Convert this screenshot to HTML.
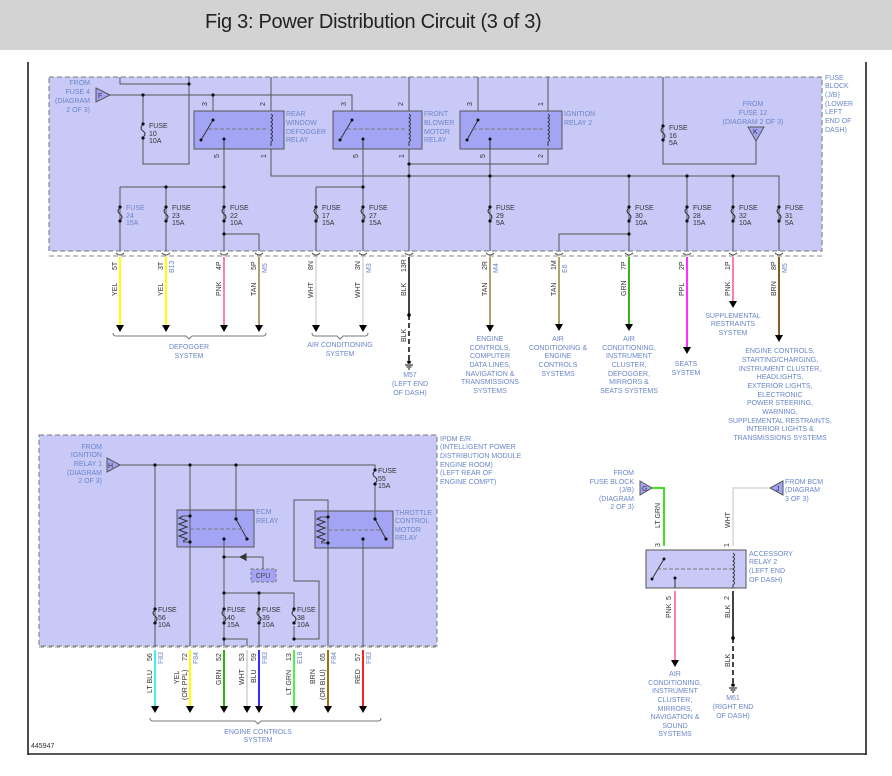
<!DOCTYPE html>
<html><head><meta charset="utf-8"><style>
html,body{margin:0;padding:0;background:#fff;width:892px;height:776px;overflow:hidden}
.hdr{position:absolute;left:0;top:0;width:892px;height:50px;background:#d3d3d3}
.hdr span{position:absolute;left:205px;top:11px;font:20px "Liberation Sans Narrow","Liberation Sans",sans-serif;color:#222;letter-spacing:-0.3px}
svg{position:absolute;left:0;top:0}
text{font-family:"Liberation Sans",sans-serif;font-size:7px}
.b{fill:#6a86c8}.k{fill:#333}.m{text-anchor:middle}.e{text-anchor:end}
.w{stroke:#555;stroke-width:1;fill:none}
</style></head><body>
<div class="hdr"><span>Fig 3: Power Distribution Circuit (3 of 3)</span></div>
<svg width="892" height="776" viewBox="0 0 892 776">
<defs>
<g id="fz"><circle r="1.6" fill="#111"/><circle cy="14" r="1.6" fill="#111"/><path d="M0 1 q-4 3 0 6 q4 3 0 6" stroke="#333" fill="none"/></g>
<path id="ar" d="M-4 -7 L4 -7 L0 0 Z" fill="#000"/>
<g id="cn"><path d="M-4 0 q4 4 8 0" stroke="#555" fill="none"/></g>
<g id="gnd"><circle r="1.8" fill="#000"/><path d="M-4 3 H4 M-2.5 5 H2.5 M-1 7 H1" stroke="#000"/></g>
</defs>
<!-- frame -->
<path d="M28 62 V755 M866 62 V755" stroke="#111" stroke-width="1.5"/>
<path d="M28 754 H866" stroke="#222" stroke-width="1.5"/>

<!-- TOP BOX -->
<rect x="49" y="77" width="773" height="174" fill="#c9c9f8" stroke="#777" stroke-dasharray="5,3"/>
<path d="M49 256 H822" stroke="#888" stroke-dasharray="5,3"/>
<polygon points="96,88 110,95 96,102" fill="#a4a4f4" stroke="#555"/><text x="98" y="98" class="k">F</text>
<text x="90" y="85" class="b e">FROM</text><text x="90" y="94" class="b e">FUSE 4</text><text x="90" y="103" class="b e">(DIAGRAM</text><text x="90" y="112" class="b e">2 OF 3)</text>
<g class="w">
<path d="M110 95 H352 V111 M213 95 V111 M143 95 V124 M143 138 V164 H189 V77 M120 77 V84 H189"/>
<path d="M271 77 V111 M271 149 V176 H779 V251 M224 149 V251 M120 187 H224 M120 187 V251 M166 187 V251 M224 234 H259 V251"/>
<path d="M409 77 V111 M409 149 V251 M409 164 H548 V149 M363 149 V251 M316 187 H363 M316 187 V251"/>
<path d="M478 77 V111 M548 77 V111 M490 149 V251 M629 176 V251 M687 176 V251 M733 176 V251 M629 234 H559 V251 M663 77 V164 H756 V141"/>
</g>
<g fill="#111">
<circle cx="143" cy="95" r="1.6"/><circle cx="213" cy="95" r="1.6"/><circle cx="189" cy="84" r="1.6"/><circle cx="166" cy="187" r="1.6"/><circle cx="224" cy="187" r="1.6"/><circle cx="224" cy="234" r="1.6"/><circle cx="363" cy="187" r="1.6"/><circle cx="409" cy="164" r="1.6"/><circle cx="409" cy="176" r="1.6"/><circle cx="490" cy="176" r="1.6"/><circle cx="629" cy="176" r="1.6"/><circle cx="687" cy="176" r="1.6"/><circle cx="733" cy="176" r="1.6"/><circle cx="629" cy="234" r="1.6"/>
</g>
<!-- relays top -->
<g stroke="#555" fill="#a4a4f4"><rect x="194" y="111" width="90" height="38"/><rect x="333" y="111" width="89" height="38"/><rect x="460" y="111" width="102" height="38"/></g>
<g stroke="#333" fill="none">
<path d="M213 120 L201 140 M224 139 V149 M352 120 L340 140 M363 139 V149 M478 120 L467 140 M490 139 V149"/>
<path d="M208 129 H268 M347 129 H406 M473 129 H545" stroke="#777" stroke-dasharray="4,2"/>
<path d="M271 114 q3 2 0 4 q3 2 0 4 q3 2 0 4 q3 2 0 4 q3 2 0 4 q3 2 0 4 q3 2 0 4 V146 M409 114 q3 2 0 4 q3 2 0 4 q3 2 0 4 q3 2 0 4 q3 2 0 4 q3 2 0 4 q3 2 0 4 V146 M548 114 q3 2 0 4 q3 2 0 4 q3 2 0 4 q3 2 0 4 q3 2 0 4 q3 2 0 4 q3 2 0 4 V146"/>
</g>
<g fill="#111"><circle cx="213" cy="120" r="1.5"/><circle cx="201" cy="140" r="1.5"/><circle cx="224" cy="139" r="1.5"/><circle cx="352" cy="120" r="1.5"/><circle cx="340" cy="140" r="1.5"/><circle cx="363" cy="139" r="1.5"/><circle cx="478" cy="120" r="1.5"/><circle cx="467" cy="140" r="1.5"/><circle cx="490" cy="139" r="1.5"/></g>
<g class="k">
<text transform="translate(207,106) rotate(-90)">3</text><text transform="translate(265,106) rotate(-90)">2</text><text transform="translate(219,158) rotate(-90)">5</text><text transform="translate(266,158) rotate(-90)">1</text>
<text transform="translate(346,106) rotate(-90)">3</text><text transform="translate(403,106) rotate(-90)">2</text><text transform="translate(358,158) rotate(-90)">5</text><text transform="translate(404,158) rotate(-90)">1</text>
<text transform="translate(472,106) rotate(-90)">3</text><text transform="translate(543,106) rotate(-90)">1</text><text transform="translate(485,158) rotate(-90)">5</text><text transform="translate(543,158) rotate(-90)">2</text>
</g>
<text x="286" y="116" class="b">REAR</text><text x="286" y="125" class="b">WINDOW</text><text x="286" y="134" class="b">DEFOGGER</text><text x="286" y="142" class="b">RELAY</text>
<text x="424" y="116" class="b">FRONT</text><text x="424" y="125" class="b">BLOWER</text><text x="424" y="134" class="b">MOTOR</text><text x="424" y="142" class="b">RELAY</text>
<text x="564" y="116" class="b">IGNITION</text><text x="564" y="125" class="b">RELAY 2</text>
<polygon points="748,127 764,127 756,141" fill="#a4a4f4" stroke="#555"/><text x="753" y="134" class="k">K</text>
<text x="753" y="106" class="b m">FROM</text><text x="753" y="115" class="b m">FUSE 12</text><text x="753" y="124" class="b m">(DIAGRAM 2 OF 3)</text>
<text x="825" y="80" class="b">FUSE</text><text x="825" y="88" class="b">BLOCK</text><text x="825" y="97" class="b">(J/B)</text><text x="825" y="106" class="b">(LOWER</text><text x="825" y="114" class="b">LEFT</text><text x="825" y="123" class="b">END OF</text><text x="825" y="132" class="b">DASH)</text>
<!-- top fuses -->
<use href="#fz" x="143" y="124"/><text x="149" y="128" class="k">FUSE</text><text x="149" y="136" class="k">10</text><text x="149" y="143" class="k">10A</text>
<use href="#fz" x="663" y="126"/><text x="669" y="130" class="k">FUSE</text><text x="669" y="138" class="k">16</text><text x="669" y="145" class="k">5A</text>
<use href="#fz" x="120" y="207"/><text x="126" y="210" class="b">FUSE</text><text x="126" y="218" class="b">24</text><text x="126" y="225" class="b">15A</text>
<use href="#fz" x="166" y="207"/><text x="172" y="210" class="k">FUSE</text><text x="172" y="218" class="k">23</text><text x="172" y="225" class="k">15A</text>
<use href="#fz" x="224" y="207"/><text x="230" y="210" class="k">FUSE</text><text x="230" y="218" class="k">22</text><text x="230" y="225" class="k">10A</text>
<use href="#fz" x="316" y="207"/><text x="322" y="210" class="k">FUSE</text><text x="322" y="218" class="k">17</text><text x="322" y="225" class="k">15A</text>
<use href="#fz" x="363" y="207"/><text x="369" y="210" class="k">FUSE</text><text x="369" y="218" class="k">27</text><text x="369" y="225" class="k">15A</text>
<use href="#fz" x="490" y="207"/><text x="496" y="210" class="k">FUSE</text><text x="496" y="218" class="k">29</text><text x="496" y="225" class="k">5A</text>
<use href="#fz" x="629" y="207"/><text x="635" y="210" class="k">FUSE</text><text x="635" y="218" class="k">30</text><text x="635" y="225" class="k">10A</text>
<use href="#fz" x="687" y="207"/><text x="693" y="210" class="k">FUSE</text><text x="693" y="218" class="k">28</text><text x="693" y="225" class="k">15A</text>
<use href="#fz" x="733" y="207"/><text x="739" y="210" class="k">FUSE</text><text x="739" y="218" class="k">32</text><text x="739" y="225" class="k">10A</text>
<use href="#fz" x="779" y="207"/><text x="785" y="210" class="k">FUSE</text><text x="785" y="218" class="k">31</text><text x="785" y="225" class="k">5A</text>
<!-- connectors under top box -->
<g><use href="#cn" x="120" y="253"/><use href="#cn" x="166" y="253"/><use href="#cn" x="224" y="253"/><use href="#cn" x="259" y="253"/><use href="#cn" x="316" y="253"/><use href="#cn" x="363" y="253"/><use href="#cn" x="409" y="253"/><use href="#cn" x="490" y="253"/><use href="#cn" x="559" y="253"/><use href="#cn" x="629" y="253"/><use href="#cn" x="687" y="253"/><use href="#cn" x="733" y="253"/><use href="#cn" x="779" y="253"/></g>
<!-- wires below top box -->
<g stroke-width="2" fill="none">
<path d="M120 257 V325" stroke="#ffff00"/><path d="M166 257 V325" stroke="#ffff00"/><path d="M224 257 V325" stroke="#ff80a0"/><path d="M259 257 V325" stroke="#b0a070"/>
<path d="M316 257 V325" stroke="#e0e0e0"/><path d="M363 257 V325" stroke="#e0e0e0"/><path d="M409 257 V315" stroke="#444"/><path d="M409 315 V362" stroke="#444" stroke-dasharray="5,3"/>
<path d="M490 257 V325" stroke="#b0a070"/><path d="M559 257 V324" stroke="#b0a070"/><path d="M629 257 V324" stroke="#40b020"/><path d="M687 257 V347" stroke="#ff30ff"/><path d="M733 257 V301" stroke="#ff80a0"/><path d="M779 257 V335" stroke="#806020"/>
</g>
<use href="#ar" x="120" y="332"/><use href="#ar" x="166" y="332"/><use href="#ar" x="224" y="332"/><use href="#ar" x="259" y="332"/><use href="#ar" x="316" y="332"/><use href="#ar" x="363" y="332"/><use href="#ar" x="490" y="332"/><use href="#ar" x="559" y="331"/><use href="#ar" x="629" y="331"/><use href="#ar" x="687" y="354"/><use href="#ar" x="733" y="308"/><use href="#ar" x="779" y="342"/>
<circle cx="409" cy="315" r="1.8" fill="#000"/><use href="#gnd" x="409" y="362"/>
<g class="k">
<text transform="translate(117,270) rotate(-90)">5T</text><text transform="translate(117,296) rotate(-90)">YEL</text>
<text transform="translate(163,270) rotate(-90)">3T</text><text transform="translate(163,296) rotate(-90)">YEL</text>
<text transform="translate(221,270) rotate(-90)">4P</text><text transform="translate(221,296) rotate(-90)">PNK</text>
<text transform="translate(256,270) rotate(-90)">5P</text><text transform="translate(256,296) rotate(-90)">TAN</text>
<text transform="translate(313,270) rotate(-90)">8N</text><text transform="translate(313,298) rotate(-90)">WHT</text>
<text transform="translate(360,270) rotate(-90)">3N</text><text transform="translate(360,298) rotate(-90)">WHT</text>
<text transform="translate(406,272) rotate(-90)">13R</text><text transform="translate(406,296) rotate(-90)">BLK</text><text transform="translate(406,342) rotate(-90)">BLK</text>
<text transform="translate(487,270) rotate(-90)">2R</text><text transform="translate(487,296) rotate(-90)">TAN</text>
<text transform="translate(556,270) rotate(-90)">1M</text><text transform="translate(556,296) rotate(-90)">TAN</text>
<text transform="translate(626,270) rotate(-90)">7P</text><text transform="translate(626,296) rotate(-90)">GRN</text>
<text transform="translate(684,270) rotate(-90)">2P</text><text transform="translate(684,296) rotate(-90)">PPL</text>
<text transform="translate(730,270) rotate(-90)">1P</text><text transform="translate(730,296) rotate(-90)">PNK</text>
<text transform="translate(776,270) rotate(-90)">8P</text><text transform="translate(776,296) rotate(-90)">BRN</text>
</g>
<g class="b">
<text transform="translate(174,273) rotate(-90)">B13</text><text transform="translate(267,273) rotate(-90)">M5</text><text transform="translate(371,273) rotate(-90)">M3</text><text transform="translate(498,273) rotate(-90)">M4</text><text transform="translate(567,273) rotate(-90)">E6</text><text transform="translate(787,273) rotate(-90)">M5</text>
</g>
<path d="M113 333 q0 3 3 3 H186 l3 3 l3 -3 H263 q3 0 3 -3 M312 333 q0 3 3 3 H337 l3 3 l3 -3 H365 q3 0 3 -3" stroke="#777" fill="none"/>
<text x="189" y="349" class="b m">DEFOGGER</text><text x="189" y="358" class="b m">SYSTEM</text>
<text x="340" y="347" class="b m">AIR CONDITIONING</text><text x="340" y="356" class="b m">SYSTEM</text>
<text x="410" y="377" class="b m">M57</text><text x="410" y="386" class="b m">(LEFT END</text><text x="410" y="395" class="b m">OF DASH)</text>
<g class="b m"><text x="490" y="341">ENGINE</text><text x="490" y="350">CONTROLS,</text><text x="490" y="358">COMPUTER</text><text x="490" y="367">DATA LINES,</text><text x="490" y="376">NAVIGATION &amp;</text><text x="490" y="384">TRANSMISSIONS</text><text x="490" y="393">SYSTEMS</text>
<text x="558" y="341">AIR</text><text x="558" y="350">CONDITIONING &amp;</text><text x="558" y="358">ENGINE</text><text x="558" y="367">CONTROLS</text><text x="558" y="376">SYSTEMS</text>
<text x="629" y="341">AIR</text><text x="629" y="350">CONDITIONING,</text><text x="629" y="358">INSTRUMENT</text><text x="629" y="367">CLUSTER,</text><text x="629" y="376">DEFOGGER,</text><text x="629" y="384">MIRRORS &amp;</text><text x="629" y="393">SEATS SYSTEMS</text>
<text x="686" y="366">SEATS</text><text x="686" y="375">SYSTEM</text>
<text x="733" y="318">SUPPLEMENTAL</text><text x="733" y="326">RESTRAINTS</text><text x="733" y="335">SYSTEM</text>
<text x="780" y="353">ENGINE CONTROLS,</text><text x="780" y="362">STARTING/CHARGING,</text><text x="780" y="371">INSTRUMENT CLUSTER,</text><text x="780" y="379">HEADLIGHTS,</text><text x="780" y="388">EXTERIOR LIGHTS,</text><text x="780" y="397">ELECTRONIC</text><text x="780" y="405">POWER STEERING,</text><text x="780" y="414">WARNING,</text><text x="780" y="423">SUPPLEMENTAL RESTRAINTS,</text><text x="780" y="431">INTERIOR LIGHTS &amp;</text><text x="780" y="440">TRANSMISSIONS SYSTEMS</text></g>

<!-- BOTTOM-LEFT BOX -->
<rect x="39" y="435" width="398" height="211" fill="#c9c9f8" stroke="#777" stroke-dasharray="5,3"/>
<polygon points="107,458 120,465 107,472" fill="#a4a4f4" stroke="#555"/><text x="108" y="468" class="k">H</text>
<g class="b e"><text x="102" y="449">FROM</text><text x="102" y="457">IGNITION</text><text x="102" y="466">RELAY 1</text><text x="102" y="475">(DIAGRAM</text><text x="102" y="483">2 OF 3)</text></g>
<g class="b"><text x="440" y="441">IPDM E/R</text><text x="440" y="449">(INTELLIGENT POWER</text><text x="440" y="458">DISTRIBUTION MODULE</text><text x="440" y="467">ENGINE ROOM)</text><text x="440" y="475">(LEFT REAR OF</text><text x="440" y="484">ENGINE COMPT)</text></g>
<rect x="177" y="510" width="77" height="37" fill="#a4a4f4" stroke="#555"/>
<rect x="315" y="511" width="78" height="37" fill="#a4a4f4" stroke="#555"/>
<rect x="251" y="569" width="25" height="13" fill="#a4a4f4" stroke="#777" stroke-dasharray="3,2"/><text x="263" y="578" class="m" style="fill:#444">CPU</text>
<g class="w">
<path d="M120 465 H375 V470 M155 465 V646 M190 465 V646 M236 465 V519 M375 484 V519 M224 539 V646 M224 557 H263 V569 M224 593 H294 V612 M259 593 V646 M294 626 V639 H319 V581 H294 V500 H328 V646 M224 626 V639 H247 V646 M363 539 V646"/>
<path d="M236 519 L247 539 M375 519 L386 539" stroke="#333"/>
<path d="M190 529 H245 M328 530 H383" stroke="#777" stroke-dasharray="4,2"/>
<path d="M183 516 l-4 2 l8 3 l-8 3 l8 3 l-8 3 l8 3 l-8 3 l8 3 l-4 2 M321 517 l-4 2 l8 3 l-8 3 l8 3 l-8 3 l8 3 l-8 3 l8 3 l-4 2" stroke="#333"/>
<path d="M183 516 H190 M183 542 H190 M321 517 H328 M321 543 H328"/>
</g>
<path d="M240 557 l6 -3 v6 z M246 553 v8" fill="#333" stroke="#333"/>
<g fill="#111"><circle cx="155" cy="465" r="1.6"/><circle cx="190" cy="465" r="1.6"/><circle cx="236" cy="465" r="1.6"/><circle cx="190" cy="516" r="1.6"/><circle cx="190" cy="542" r="1.6"/><circle cx="236" cy="519" r="1.6"/><circle cx="247" cy="539" r="1.6"/><circle cx="224" cy="539" r="1.6"/><circle cx="224" cy="557" r="1.6"/><circle cx="224" cy="593" r="1.6"/><circle cx="259" cy="593" r="1.6"/><circle cx="224" cy="639" r="1.6"/><circle cx="294" cy="639" r="1.6"/><circle cx="328" cy="517" r="1.6"/><circle cx="328" cy="543" r="1.6"/><circle cx="375" cy="519" r="1.6"/><circle cx="386" cy="539" r="1.6"/><circle cx="363" cy="539" r="1.6"/></g>
<text x="256" y="514" class="b">ECM</text><text x="256" y="523" class="b">RELAY</text>
<g class="b"><text x="395" y="515">THROTTLE</text><text x="395" y="523">CONTROL</text><text x="395" y="532">MOTOR</text><text x="395" y="540">RELAY</text></g>
<use href="#fz" x="375" y="470"/><text x="378" y="473" class="k">FUSE</text><text x="378" y="481" class="k">55</text><text x="378" y="488" class="k">15A</text>
<use href="#fz" x="155" y="609"/><text x="158" y="612" class="k">FUSE</text><text x="158" y="620" class="k">56</text><text x="158" y="627" class="k">10A</text>
<use href="#fz" x="224" y="609"/><text x="227" y="612" class="k">FUSE</text><text x="227" y="620" class="k">40</text><text x="227" y="627" class="k">15A</text>
<use href="#fz" x="259" y="609"/><text x="262" y="612" class="k">FUSE</text><text x="262" y="620" class="k">39</text><text x="262" y="627" class="k">10A</text>
<use href="#fz" x="294" y="609"/><text x="297" y="612" class="k">FUSE</text><text x="297" y="620" class="k">38</text><text x="297" y="627" class="k">10A</text>
<path d="M39 647 H437" stroke="#888" stroke-dasharray="5,3"/>
<g stroke-width="2" fill="none">
<path d="M155 650 V706" stroke="#40f0f0"/><path d="M190 650 V706" stroke="#ffff00"/><path d="M224 650 V706" stroke="#30b010"/><path d="M247 650 V706" stroke="#dcdcdc"/><path d="M259 650 V706" stroke="#3030ff"/><path d="M294 650 V706" stroke="#50f050"/><path d="M328 650 V706" stroke="#a07010"/><path d="M363 650 V706" stroke="#ff2020"/>
</g>
<use href="#ar" x="155" y="713"/><use href="#ar" x="190" y="713"/><use href="#ar" x="224" y="713"/><use href="#ar" x="247" y="713"/><use href="#ar" x="259" y="713"/><use href="#ar" x="294" y="713"/><use href="#ar" x="328" y="713"/><use href="#ar" x="363" y="713"/>
<g class="k">
<text transform="translate(152,661) rotate(-90)">56</text><text transform="translate(187,661) rotate(-90)">72</text><text transform="translate(221,661) rotate(-90)">52</text><text transform="translate(244,661) rotate(-90)">53</text><text transform="translate(256,661) rotate(-90)">59</text><text transform="translate(291,661) rotate(-90)">13</text><text transform="translate(325,661) rotate(-90)">65</text><text transform="translate(360,661) rotate(-90)">57</text>
<text transform="translate(152,693) rotate(-90)">LT BLU</text><text transform="translate(179,684) rotate(-90)">YEL</text><text transform="translate(187,700) rotate(-90)">(OR PPL)</text><text transform="translate(221,685) rotate(-90)">GRN</text><text transform="translate(244,685) rotate(-90)">WHT</text><text transform="translate(256,683) rotate(-90)">BLU</text><text transform="translate(291,695) rotate(-90)">LT GRN</text><text transform="translate(315,684) rotate(-90)">BRN</text><text transform="translate(325,700) rotate(-90)">(OR BLU)</text><text transform="translate(360,684) rotate(-90)">RED</text>
</g>
<g class="b"><text transform="translate(163,664) rotate(-90)">F83</text><text transform="translate(198,664) rotate(-90)">F84</text><text transform="translate(267,664) rotate(-90)">F83</text><text transform="translate(302,664) rotate(-90)">E18</text><text transform="translate(336,664) rotate(-90)">F84</text><text transform="translate(371,664) rotate(-90)">F83</text></g>
<path d="M150 718 q0 3 3 3 H255 l3 3 l3 -3 H378 q3 0 3 -3" stroke="#777" fill="none"/>
<text x="258" y="734" class="b m">ENGINE CONTROLS</text><text x="258" y="742" class="b m">SYSTEM</text>
<text x="31" y="748" class="k">445947</text>

<!-- ACCESSORY RELAY -->
<polygon points="640,481 652,488 640,495" fill="#a4a4f4" stroke="#555"/><text x="642" y="491" class="k">G</text>
<g class="b e"><text x="634" y="475">FROM</text><text x="634" y="484">FUSE BLOCK</text><text x="634" y="492">(J/B)</text><text x="634" y="501">(DIAGRAM</text><text x="634" y="509">2 OF 3)</text></g>
<path d="M652 488 H664 V546" stroke="#40e020" stroke-width="2" fill="none"/>
<polygon points="783,481 770,488 783,495" fill="#a4a4f4" stroke="#555"/><text x="776" y="491" class="k">J</text>
<g class="b"><text x="785" y="484">FROM BCM</text><text x="785" y="492">(DIAGRAM</text><text x="785" y="501">3 OF 3)</text></g>
<path d="M770 488 H733 V546" stroke="#e0e0e0" stroke-width="2" fill="none"/>
<text transform="translate(660,528) rotate(-90)" class="k">LT GRN</text><text transform="translate(730,528) rotate(-90)" class="k">WHT</text>
<text transform="translate(660,547) rotate(-90)" class="k">3</text><text transform="translate(729,547) rotate(-90)" class="k">1</text>
<rect x="646" y="550" width="100" height="38" fill="#c9c9f8" stroke="#555"/>
<g stroke="#333" fill="none"><path d="M664 559 L652 579 M675 578 V588"/><path d="M657 569 H733" stroke="#777" stroke-dasharray="4,2"/><path d="M733 553 q3 2 0 4 q3 2 0 4 q3 2 0 4 q3 2 0 4 q3 2 0 4 q3 2 0 4 q3 2 0 4 q3 2 0 4 V588"/></g>
<g fill="#111"><circle cx="664" cy="559" r="1.5"/><circle cx="652" cy="579" r="1.5"/><circle cx="675" cy="578" r="1.5"/></g>
<g class="b"><text x="749" y="556">ACCESSORY</text><text x="749" y="564">RELAY 2</text><text x="749" y="573">(LEFT END</text><text x="749" y="582">OF DASH)</text></g>
<text transform="translate(671,600) rotate(-90)" class="k">5</text><text transform="translate(729,600) rotate(-90)" class="k">2</text>
<path d="M675 591 V660" stroke="#ff80a0" stroke-width="2"/><use href="#ar" x="675" y="667"/>
<text transform="translate(671,618) rotate(-90)" class="k">PNK</text>
<path d="M733 591 V638" stroke="#444" stroke-width="2"/><path d="M733 638 V685" stroke="#444" stroke-width="2" stroke-dasharray="5,3"/>
<circle cx="733" cy="638" r="1.8"/><use href="#gnd" x="733" y="685"/>
<text transform="translate(730,618) rotate(-90)" class="k">BLK</text><text transform="translate(730,667) rotate(-90)" class="k">BLK</text>
<g class="b m"><text x="675" y="676">AIR</text><text x="675" y="685">CONDITIONING,</text><text x="675" y="693">INSTRUMENT</text><text x="675" y="702">CLUSTER,</text><text x="675" y="711">MIRRORS,</text><text x="675" y="719">NAVIGATION &amp;</text><text x="675" y="728">SOUND</text><text x="675" y="736">SYSTEMS</text>
<text x="733" y="700">M61</text><text x="733" y="709">(RIGHT END</text><text x="733" y="718">OF DASH)</text></g>
</svg>
</body></html>
